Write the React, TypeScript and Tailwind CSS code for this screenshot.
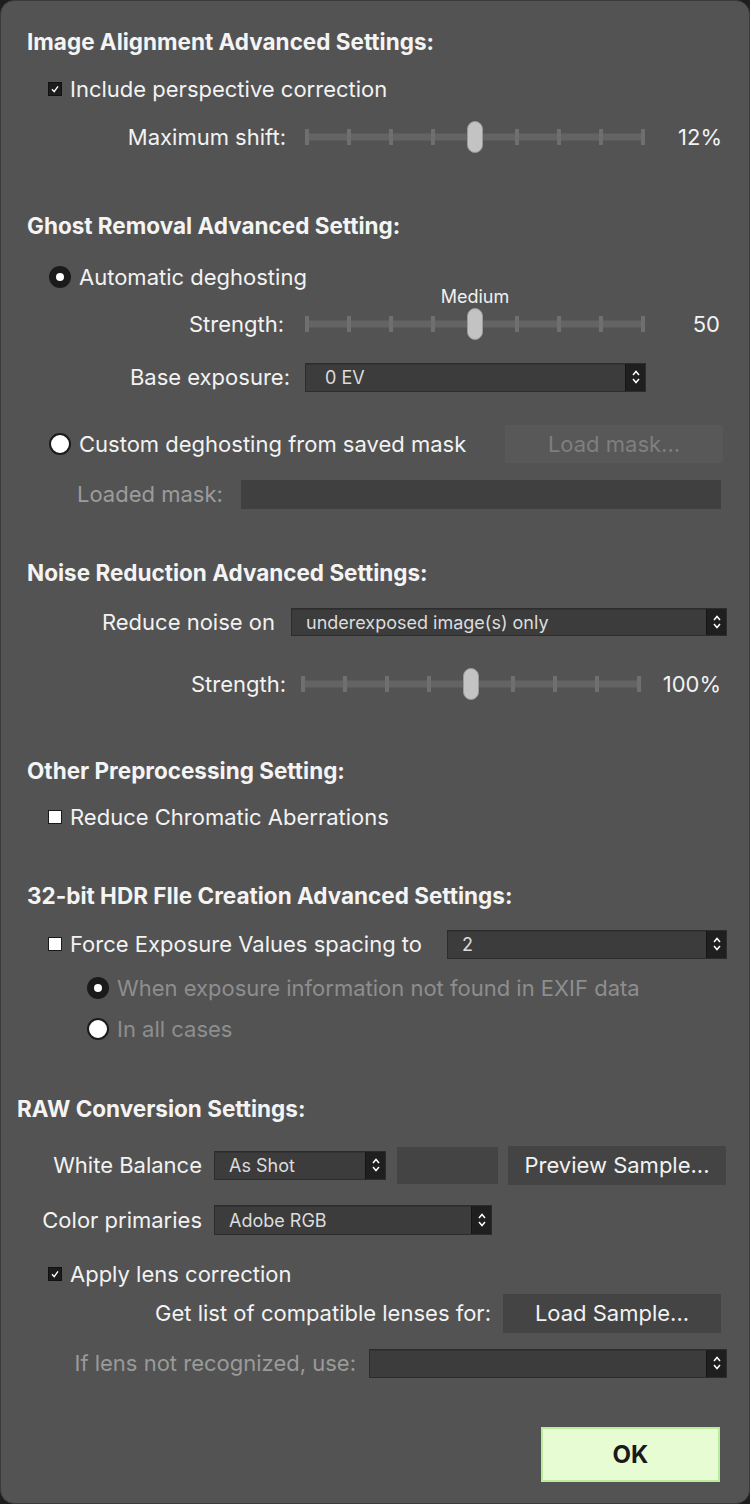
import React from "react";

const FONT = { fontFamily: 'Inter, "Liberation Sans", Arial, sans-serif' };

function Heading({ children, x = 26, mt }: { children: React.ReactNode; x?: number; mt: string }) {
  return (
    <div className={`${mt} h-[40px] flex items-center text-[22.5px] font-bold text-[#f4f4f4] tracking-[0px]`} style={{ paddingLeft: x }}>
      {children}
    </div>
  );
}

function CheckBox({ checked }: { checked: boolean }) {
  return checked ? (
    <div className="w-[14px] h-[14px] bg-[#1c1c1c] border border-[#111] flex items-center justify-center">
      <svg width="10" height="10" viewBox="0 0 10 10">
        <path d="M2 5.2 L4.2 7.6 L8 2.4" stroke="#ffffff" strokeWidth="1.4" fill="none" />
      </svg>
    </div>
  ) : (
    <div className="w-[14px] h-[14px] bg-[#ffffff] border border-[#1a1a1a]" />
  );
}

function Radio({ checked }: { checked: boolean }) {
  return checked ? (
    <div className="w-[22px] h-[22px] rounded-full bg-[#1b1b1b] flex items-center justify-center">
      <div className="w-[8px] h-[8px] rounded-full bg-white" />
    </div>
  ) : (
    <div className="w-[22px] h-[22px] rounded-full bg-white border-2 border-[#1b1b1b]" />
  );
}

function Stepper() {
  return (
    <div className="w-[20px] h-full bg-[#1f1f1f] border-l border-[#151515] flex items-center justify-center">
      <svg width="10" height="18" viewBox="0 0 10 18">
        <path d="M2 7 L5 3.5 L8 7" stroke="#ffffff" strokeWidth="1.5" fill="none" />
        <path d="M2 11 L5 14.5 L8 11" stroke="#ffffff" strokeWidth="1.5" fill="none" />
      </svg>
    </div>
  );
}

function Select({ value, w, h = "h-[29px]", pl = "pl-[14px]" }: { value?: string; w: string; h?: string; pl?: string }) {
  return (
    <div className={`${w} ${h} flex bg-[#3c3c3c] border border-[#2c2c2c] shadow-[inset_0_1px_0_#333]`}>
      <div className={`flex-1 flex items-center ${pl} text-[18px] text-[#dcdcdc]`}>{value}</div>
      <Stepper />
    </div>
  );
}

function Slider({ w = "w-[340px]", medium }: { w?: string; medium?: boolean }) {
  const ticks = Array.from({ length: 9 });
  return (
    <div className={`${w} relative h-[34px] flex items-center`}>
      <div className="absolute left-0 right-0 top-1/2 -translate-y-1/2 h-[7px] bg-[#646464]" />
      <div className="relative w-full flex justify-between items-center">
        {ticks.map((_, i) => (
          <div key={i} className={`w-[4px] h-[16px] ${i === 4 ? "bg-transparent" : "bg-[#6f6f6f]"}`} />
        ))}
      </div>
      <div className="absolute left-1/2 top-1/2 -translate-x-1/2 -translate-y-1/2 w-[16px] h-[32px] rounded-full bg-[#c3c3c3] border border-[#9a9a9a]" />
      {medium && (
        <div className="absolute left-1/2 -translate-x-1/2 top-[-21px] text-[18px] leading-[22px] text-[#f0f0f0]">Medium</div>
      )}
    </div>
  );
}

export default function App() {
  return (
    <div className="w-[750px] h-[1504px] bg-[#1e1e1e]" style={FONT}>
      <div className="w-[750px] h-[1504px] bg-[#535353] rounded-[14px] border border-[#3a3a3a] overflow-hidden text-[22px] text-[#f2f2f2]">
        <Heading mt="mt-[21px]">Image Alignment Advanced Settings:</Heading>

        <div className="mt-[7px] h-[40px] flex items-center pl-[47px] gap-[8px]">
          <CheckBox checked />
          <span>Include perspective correction</span>
        </div>

        <div className="mt-[8px] h-[40px] flex items-center">
          <div className="w-[285px] text-right">Maximum shift:</div>
          <div className="ml-[19px]"><Slider /></div>
          <div className="flex-1 text-right pr-[27px]">12%</div>
        </div>

        <Heading mt="mt-[49px]">Ghost Removal Advanced Setting:</Heading>

        <div className="mt-[11px] h-[40px] flex items-center pl-[48px] gap-[8px]">
          <Radio checked />
          <span>Automatic deghosting</span>
        </div>

        <div className="mt-[7px] h-[40px] flex items-center">
          <div className="w-[283px] text-right">Strength:</div>
          <div className="ml-[21px]"><Slider medium /></div>
          <div className="flex-1 text-right pr-[29px]">50</div>
        </div>

        <div className="mt-[13px] h-[40px] flex items-center">
          <div className="w-[289px] text-right">Base exposure:</div>
          <div className="ml-[15px]"><Select value="0 EV" w="w-[341px]" pl="pl-[19px]" /></div>
        </div>

        <div className="mt-[27px] h-[40px] flex items-center pl-[48px] gap-[8px]">
          <Radio checked={false} />
          <span>Custom deghosting from saved mask</span>
          <div className="ml-auto mr-[26px] w-[218px] h-[38px] bg-[#585858] flex items-center justify-center text-[#7f7f7f]">
            Load mask...
          </div>
        </div>

        <div className="mt-[10px] h-[40px] flex items-center pl-[76px]">
          <div className="w-[164px] text-[#9c9c9c]">Loaded mask:</div>
          <div className="w-[480px] h-[29px] bg-[#404040]" />
        </div>

        <Heading mt="mt-[39px]">Noise Reduction Advanced Settings:</Heading>

        <div className="mt-[9px] h-[40px] flex items-center">
          <div className="w-[274px] text-right">Reduce noise on</div>
          <div className="ml-[16px]"><Select value="underexposed image(s) only" w="w-[436px]" h="h-[28px]" /></div>
        </div>

        <div className="mt-[22px] h-[40px] flex items-center">
          <div className="w-[285px] text-right">Strength:</div>
          <div className="ml-[15px]"><Slider /></div>
          <div className="flex-1 text-right pr-[28px]">100%</div>
        </div>

        <Heading mt="mt-[47px]">Other Preprocessing Setting:</Heading>

        <div className="mt-[6px] h-[40px] flex items-center pl-[47px] gap-[8px]">
          <CheckBox checked={false} />
          <span>Reduce Chromatic Aberrations</span>
        </div>

        <Heading mt="mt-[39px]">32-bit HDR FIle Creation Advanced Settings:</Heading>

        <div className="mt-[8px] h-[40px] flex items-center pl-[47px] gap-[8px]">
          <CheckBox checked={false} />
          <span>Force Exposure Values spacing to</span>
          <div className="ml-auto mr-[22px]"><Select value="2" w="w-[280px]" /></div>
        </div>

        <div className="mt-[4px] h-[40px] flex items-center pl-[86px] gap-[8px]">
          <Radio checked />
          <span className="text-[#8e8e8e]">When exposure information not found in EXIF data</span>
        </div>

        <div className="mt-[1px] h-[40px] flex items-center pl-[86px] gap-[8px]">
          <Radio checked={false} />
          <span className="text-[#8e8e8e]">In all cases</span>
        </div>

        <Heading mt="mt-[40px]" x={16}>RAW Conversion Settings:</Heading>

        <div className="mt-[16px] h-[40px] flex items-center">
          <div className="w-[201px] text-right">White Balance</div>
          <div className="ml-[12px]"><Select value="As Shot" w="w-[172px]" /></div>
          <div className="ml-[11px] w-[101px] h-[37px] bg-[#444444]" />
          <div className="ml-[10px] w-[218px] h-[39px] bg-[#444444] flex items-center justify-center">Preview Sample...</div>
        </div>

        <div className="mt-[15px] h-[40px] flex items-center">
          <div className="w-[201px] text-right">Color primaries</div>
          <div className="ml-[12px]"><Select value="Adobe RGB" w="w-[278px]" h="h-[30px]" /></div>
        </div>

        <div className="mt-[15px] h-[38px] flex items-center pl-[47px] gap-[8px]">
          <CheckBox checked />
          <span>Apply lens correction</span>
        </div>

        <div className="h-[40px] flex items-center">
          <div className="w-[490px] text-right">Get list of compatible lenses for:</div>
          <div className="ml-[12px] w-[218px] h-[39px] bg-[#444444] flex items-center justify-center">Load Sample...</div>
        </div>

        <div className="mt-[10px] h-[40px] flex items-center">
          <div className="w-[355px] text-right text-[#9a9a9a]">If lens not recognized, use:</div>
          <div className="ml-[13px]"><Select w="w-[358px]" /></div>
        </div>

        <div className="mt-[44px] flex justify-end pr-[29px]">
          <div className="w-[179px] h-[55px] bg-[#e7fcd2] border-2 border-[#b9ec9c] flex items-center justify-center text-[24px] font-bold text-[#1a1a1a]">
            OK
          </div>
        </div>
      </div>
    </div>
  );
}
